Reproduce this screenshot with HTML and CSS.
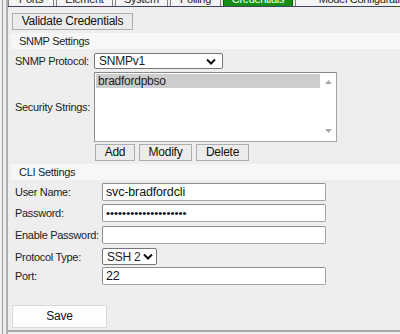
FILE: index.html
```html
<!DOCTYPE html>
<html lang="en">
<head>
    <meta charset="UTF-8">
    <title>Credentials</title>
    <link rel="stylesheet" href="styles.css">
</head>
<body>
    <div class="frame">
        <div class="page">
            <div class="tabs">
                <div class="tab tab-ports">Ports</div>
                <div class="tab tab-element">Element</div>
                <div class="tab tab-system">System</div>
                <div class="tab tab-polling">Polling</div>
                <div class="tab tab-credentials active">Credentials</div>
                <div class="tab tab-model">Model Configuration</div>
            </div>

            <div class="panel">
                <button class="btn btn-validate">Validate Credentials</button>

                <div class="section-title">SNMP Settings</div>
                <div class="row row-protocol snmp">
                    <label>SNMP Protocol:</label>
                    <div class="select select-snmp">
                        <span>SNMPv1</span>
                        <svg width="10" height="7" viewBox="0 0 10 7"><polyline points="1,1.5 5,5.5 9,1.5" fill="none" stroke="#111" stroke-width="2"/></svg>
                    </div>
                </div>
                <div class="row row-strings snmp">
                    <label>Security Strings:</label>
                    <div class="listbox">
                        <div class="list-items">
                            <div class="list-item selected">bradfordpbso</div>
                        </div>
                        <div class="scrollbar">
                            <svg width="7" height="4" viewBox="0 0 7 4"><polygon points="0,4 3.5,0 7,4" fill="#a9a9a9"/></svg>
                            <svg width="7" height="4" viewBox="0 0 7 4"><polygon points="0,0 3.5,4 7,0" fill="#a9a9a9"/></svg>
                        </div>
                    </div>
                </div>
                <div class="row row-buttons snmp">
                    <span class="spacer"></span>
                    <div class="btn-group">
                        <button class="btn btn-add">Add</button>
                        <button class="btn btn-modify">Modify</button>
                        <button class="btn btn-delete">Delete</button>
                    </div>
                </div>

                <div class="section-title">CLI Settings</div>
                <div class="row row-user cli">
                    <label>User Name:</label>
                    <input class="text" type="text" value="svc-bradfordcli">
                </div>
                <div class="row row-pass cli">
                    <label>Password:</label>
                    <input class="text text-secret" type="password" value="bradfordclipassword1">
                </div>
                <div class="row row-enable cli">
                    <label>Enable Password:</label>
                    <input class="text" type="password" value="">
                </div>
                <div class="row row-type cli">
                    <label>Protocol Type:</label>
                    <div class="select select-ssh">
                        <span>SSH 2</span>
                        <svg width="10" height="7" viewBox="0 0 10 7"><polyline points="1,1.5 5,5.5 9,1.5" fill="none" stroke="#111" stroke-width="2"/></svg>
                    </div>
                </div>
                <div class="row row-port cli">
                    <label>Port:</label>
                    <input class="text" type="text" value="22">
                </div>

                <button class="btn btn-save">Save</button>
            </div>
        </div>
    </div>
</body>
</html>
```

FILE: styles.css
```css
body {
    margin: 0;
    width: 400px;
    height: 334px;
    overflow: hidden;
    background-color: #eeeeee;
    font-family: "Liberation Sans", Arial, sans-serif;
    font-size: 11px;
    letter-spacing: -0.3px;
    color: #1c1c1c;
}
.frame {
    height: 334px;
    margin-left: 2px;
    padding-left: 3px;
    border-left: 1px solid #9c9c9c;
}
.page {
    height: 100%;
    border-left: 2px solid #b0b0b0;
}

/* tab strip, mostly scrolled off the top */
.tabs {
    display: flex;
    align-items: flex-end;
    gap: 2px;
    height: 6px;
    overflow: hidden;
    border-bottom: 1px solid #3d4461;
}
.tab {
    flex: none;
    box-sizing: border-box;
    height: 20px;
    padding-top: 6px;
    line-height: 12px;
    text-align: center;
    white-space: nowrap;
    overflow: hidden;
    background-color: #f4f4f4;
    border: 1px solid #848484;
    border-bottom: none;
}
.tab-ports { width: 46px; }
.tab-element { width: 57px; }
.tab-system { width: 53px; }
.tab-polling { width: 51px; }
.tab-credentials { width: 70px; }
.tab-model { width: 140px; }
.tab.active {
    background-color: #148f14;
    border-color: #0b650b;
    color: #fff;
}

.panel {
    padding: 6px 0 2px 4px;
    border-bottom: 2px solid #a9a9a9;
}
.btn {
    display: block;
    box-sizing: border-box;
    height: 17px;
    padding: 0;
    font-family: inherit;
    font-size: 12px;
    letter-spacing: -0.25px;
    line-height: 15px;
    white-space: nowrap;
    color: #111;
    background-color: #ececec;
    border: 1px solid #adadad;
    border-radius: 0;
}
.btn-validate {
    width: 121px;
}
.section-title {
    height: 16px;
    line-height: 16px;
    margin: 3px 0 0 -1px;
    padding-left: 8px;
    background-color: #f7f7f7;
}

.row {
    display: flex;
    align-items: center;
    padding-left: 3px;
}
.row label,
.row .spacer {
    flex: none;
    white-space: nowrap;
}
.snmp label,
.snmp .spacer {
    width: 79px;
}
.cli label {
    width: 87px;
}
.row-protocol { margin-top: 4px; }
.row-strings { margin-top: 3px; }
.row-buttons { margin-top: 2px; }
.row-user { margin-top: 3px; }
.row-pass { margin-top: 3px; }
.row-enable { margin-top: 4px; }
.row-type { margin-top: 4px; }
.row-port { margin-top: 2px; }

.select {
    display: flex;
    align-items: center;
    justify-content: space-between;
    box-sizing: border-box;
    height: 16px;
    padding: 0 6px 0 4px;
    font-size: 12px;
    letter-spacing: -0.25px;
    white-space: nowrap;
    background-color: #fff;
    border: 1px solid #767676;
    border-radius: 2px;
}
.select-snmp {
    width: 129px;
}
.select-ssh {
    width: 55px;
    height: 17px;
    padding-left: 4px;
    padding-right: 3px;
}

.listbox {
    display: flex;
    box-sizing: border-box;
    width: 243px;
    height: 70px;
    background-color: #fff;
    border: 1px solid #a3a3a3;
    border-top-color: #8a8a8a;
    border-left-color: #8f8f8f;
}
.list-items {
    flex: 1;
    padding: 1px 0 0 1px;
}
.list-item {
    height: 14px;
    line-height: 14px;
    padding-left: 2px;
    font-size: 12px;
    letter-spacing: -0.25px;
}
.list-item.selected {
    background-color: #cdcdcd;
}
.scrollbar {
    display: flex;
    flex-direction: column;
    justify-content: space-between;
    align-items: center;
    width: 16px;
    padding: 7px 0 8px;
    box-sizing: border-box;
}

.btn-group {
    display: flex;
    gap: 4px;
    padding-left: 1px;
}
.btn-add { width: 40px; }
.btn-modify { width: 53px; }
.btn-delete { width: 53px; }

.text {
    box-sizing: border-box;
    width: 224px;
    height: 18px;
    padding: 0 3px;
    font-family: inherit;
    font-size: 12.5px;
    letter-spacing: -0.15px;
    color: #111;
    background-color: #fff;
    border: 1px solid #8f8f8f;
    border-right-color: #a6a6a6;
    border-bottom-color: #a6a6a6;
    border-radius: 2px;
    outline: none;
}
.text-secret {
    font-size: 11.5px;
    letter-spacing: 0;
}
.btn-save {
    width: 95px;
    height: 23px;
    margin-top: 20px;
    background-color: #fdfdfd;
    border-color: #dadada;
}
```
